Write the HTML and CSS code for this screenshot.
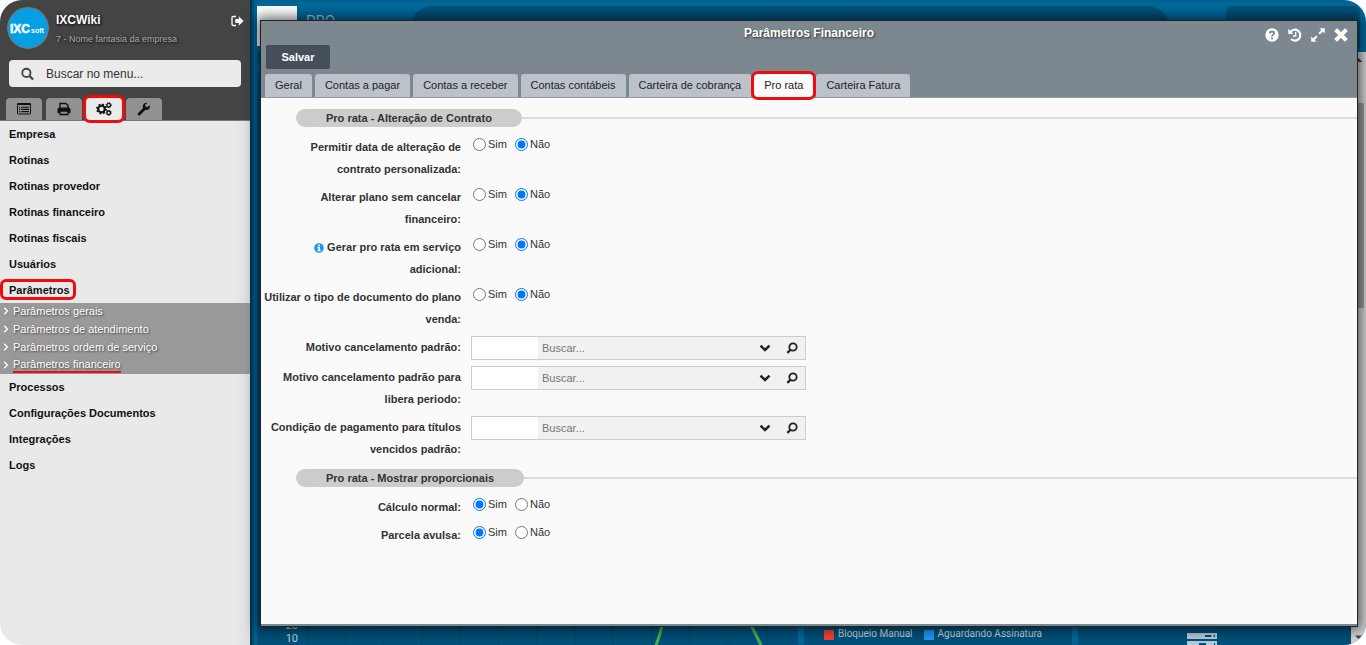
FILE: index.html
```
<!DOCTYPE html>
<html lang="pt-BR">
<head>
<meta charset="utf-8">
<title>IXCWiki - Parâmetros Financeiro</title>
<link rel="stylesheet" href="styles.css">
</head>
<body>
<svg class="defs" aria-hidden="true">
  <symbol id="chevron-down" viewBox="0 0 12 12"><path d="M1.5 3.7 6 8l4.500-4.300" fill="none" stroke="currentColor" stroke-width="2.500"/></symbol>
  <symbol id="lookup" viewBox="0 0 12 12"><circle cx="7" cy="5" r="3.700" fill="none" stroke="currentColor" stroke-width="1.800"/><path d="M4.500 7.700 1.300 10.900" stroke="currentColor" stroke-width="2.200"/></symbol>
  <symbol id="angle" viewBox="0 0 6 8"><path d="M1.200 .8 4.400 4 1.200 7.200" fill="none" stroke="currentColor" stroke-width="1.300"/></symbol>
</svg>
<div class="app">
  <aside class="sidebar">
    <header class="profile">
      <svg class="avatar" viewBox="0 0 42 42" role="img" aria-label="IXCsoft">
        <circle cx="21" cy="21" r="20.300" fill="#059fe3" stroke="#6c7a80" stroke-width="1.200"/>
        <text x="3" y="26" class="avatar-ixc">IXC</text><text x="24" y="26" class="avatar-soft">soft</text>
      </svg>
      <div class="who">
        <strong class="user">IXCWiki</strong>
        <span class="company">7 - Nome fantasia da empresa</span>
      </div>
      <button class="logout" aria-label="Sair"><svg viewBox="0 0 13 12"><path d="M5 1.500H2.200Q1 1.500 1 2.700v6.600q0 1.200 1.200 1.200H5" fill="none" stroke="currentColor" stroke-width="1.300"/><path d="M4.300 4h3.500V1.200L12.600 6l-4.800 4.800V8H4.300z" fill="currentColor"/></svg></button>
    </header>
    <div class="menu-search">
      <svg viewBox="0 0 14 14"><circle cx="5.800" cy="5.800" r="4.400" fill="none" stroke="currentColor" stroke-width="2"/><path d="m9 9 4 4" stroke="currentColor" stroke-width="2.400"/></svg>
      <input type="text" placeholder="Buscar no menu..." aria-label="Buscar no menu">
    </div>
    <div class="side-tabs">
      <button aria-label="Cadastros"><svg viewBox="0 0 16 14"><rect x="1.500" y="1.500" width="13" height="10.500" rx="1" fill="none" stroke="currentColor"/><path d="M1.500 2h13" stroke="currentColor" stroke-width="2"/><path d="M3 5.200h1.200M3 7.400h1.200M3 9.600h1.200M5.200 5.200H13M5.200 7.400H13M5.200 9.600H13" stroke="currentColor" stroke-width="1.100"/></svg></button>
      <button aria-label="Relatórios"><svg viewBox="0 0 16 14"><path d="M4 6V1.500h6L12 3.500V6" fill="none" stroke="currentColor" stroke-width="1.400"/><path d="M3.500 5.500h9Q14.500 5.500 14.500 7.500V11H12V9H4v2H1.500V7.500Q1.500 5.500 3.500 5.500z" fill="currentColor"/><path d="M4 9h8v3.500H4z" fill="none" stroke="currentColor" stroke-width="1.300"/></svg></button>
      <button class="active marked" aria-label="Configurações"><svg viewBox="0 0 16 14"><circle cx="5.500" cy="7" r="3.300" fill="none" stroke="currentColor" stroke-width="2.200"/><circle cx="5.500" cy="7" r="4.700" fill="none" stroke="currentColor" stroke-width="1.600" stroke-dasharray="1.850 1.850"/><circle cx="12.700" cy="3.200" r="1.800" fill="none" stroke="currentColor" stroke-width="1.300"/><circle cx="12.700" cy="3.200" r="2.600" fill="none" stroke="currentColor" stroke-dasharray="1.020 1.020"/><circle cx="12.700" cy="10.800" r="1.800" fill="none" stroke="currentColor" stroke-width="1.300"/><circle cx="12.700" cy="10.800" r="2.600" fill="none" stroke="currentColor" stroke-dasharray="1.020 1.020"/></svg></button>
      <button aria-label="Ferramentas"><svg viewBox="0 0 16 14"><path d="M3.200 12 9 6.300" stroke="currentColor" stroke-width="2.900" stroke-linecap="round"/><path d="M13.700 3.200A3.600 3.600 0 1 1 11.300 1l-2 1.400v1.900l1.800 1z" fill="currentColor"/></svg></button>
    </div>
    <nav class="menu">
      <a href="#">Empresa</a>
      <a href="#">Rotinas</a>
      <a href="#">Rotinas provedor</a>
      <a href="#">Rotinas financeiro</a>
      <a href="#">Rotinas fiscais</a>
      <a href="#">Usuários</a>
      <a href="#" class="current">Parâmetros</a>
      <div class="submenu">
        <a href="#"><svg viewBox="0 0 6 8"><use href="#angle"/></svg><span>Parâmetros gerais</span></a>
        <a href="#"><svg viewBox="0 0 6 8"><use href="#angle"/></svg><span>Parâmetros de atendimento</span></a>
        <a href="#"><svg viewBox="0 0 6 8"><use href="#angle"/></svg><span>Parâmetros ordem de serviço</span></a>
        <a href="#"><svg viewBox="0 0 6 8"><use href="#angle"/></svg><span class="underlined">Parâmetros financeiro</span></a>
      </div>
      <a href="#">Processos</a>
      <a href="#">Configurações Documentos</a>
      <a href="#">Integrações</a>
      <a href="#">Logs</a>
    </nav>
  </aside>

  <main class="workspace">
    <div class="topbar">
      <div class="brand-tile"></div>
      <span class="brand">PRO —</span>
      <div class="top-search"></div>
      <div class="top-box"></div>
    </div>
    <div class="dashboard">
      <div class="board">
        <div class="strip"></div>
        <section class="panel chart">
          <div class="axis"><span>20</span><span>10</span></div>
          <svg class="plot" width="491" height="26" viewBox="0 0 491 26">
            <path d="M.5 0v26M38.500 0v26M77 0v26M115 0v26M153 0v26M191.500 0v26M230 0v26M268 0v26M306 0v26M344.500 0v26M383 0v26M421 0v26M459.500 0v26" stroke="#004467" fill="none"/>
            <path d="M349 26q5-12 7-26M441 0l13 26" stroke="#4caf50" stroke-width="3" fill="none"/>
          </svg>
        </section>
        <section class="panel legend">
          <span class="key key-red"></span><span>Bloqueio Manual</span>
          <span class="key key-blue"></span><span>Aguardando Assinatura</span>
        </section>
        <section class="panel server">
          <svg viewBox="0 0 30 14"><path d="M1 3h28v4H1zM1 11h28v5H1z" fill="none" stroke="#b3ccd9" stroke-width="2"/><path d="M2 5h16M2 13h10" stroke="#b3ccd9" stroke-width="2"/><circle cx="25.500" cy="5" r="1.300" fill="#b3ccd9"/><path d="M19 13h8" stroke="#b3ccd9" stroke-width="2"/></svg>
        </section>
      </div>
      <div class="scrollbar">
        <svg viewBox="0 0 15 15"><path d="M3.500 10h8l-4-4z" fill="#444"/></svg>
        <div class="thumb"></div>
        <svg viewBox="0 0 15 15"><path d="M4 5.500h7L7.500 9z" fill="#444"/></svg>
      </div>
    </div>

    <section class="window" role="dialog" aria-labelledby="window-title">
      <header class="window-head">
        <div class="titlebar">
          <h1 id="window-title">Parâmetros Financeiro</h1>
          <div class="window-actions">
            <button aria-label="Ajuda"><svg viewBox="0 0 14 14"><circle cx="7" cy="7" r="6.700" fill="currentColor"/><path d="M4.900 5.400Q5 3.500 7 3.500t2.100 1.700Q9.100 6.200 8 6.800T7 8.500" fill="none" stroke="#7d8790" stroke-width="1.800"/><path d="M6.100 9.500h1.900v1.800H6.100z" fill="#7d8790"/></svg></button>
            <button aria-label="Histórico"><svg viewBox="0 0 14 14"><path d="M2.300 4A5.500 5.500 0 1 1 3 11.100" fill="none" stroke="currentColor" stroke-width="2.100"/><path d="M.3 .8v5.100h5.100z" fill="currentColor"/><path d="M7.700 4v4H5" fill="none" stroke="currentColor" stroke-width="1.300"/></svg></button>
            <button aria-label="Maximizar"><svg viewBox="0 0 14 14"><path d="M8.500 .2h5.300v5.300zM.2 8.500v5.300h5.300z" fill="currentColor"/><path d="m12 2-3.800 3.800M5.800 8.200 2 12" stroke="currentColor" stroke-width="2.200"/></svg></button>
            <button aria-label="Fechar"><svg viewBox="0 0 14 14"><path d="m3 3 8 8m0-8-8 8" stroke="currentColor" stroke-width="3.900" stroke-linecap="square"/></svg></button>
          </div>
        </div>
        <div class="toolbar"><button class="save">Salvar</button></div>
        <div class="tabs" role="tablist">
          <button role="tab">Geral</button>
          <button role="tab">Contas a pagar</button>
          <button role="tab">Contas a receber</button>
          <button role="tab">Contas contábeis</button>
          <button role="tab">Carteira de cobrança</button>
          <button role="tab" class="selected" aria-selected="true">Pro rata</button>
          <button role="tab">Carteira Fatura</button>
        </div>
      </header>
      <form class="form">
        <h2 class="group"><span>Pro rata - Alteração de Contrato</span></h2>
        <div class="row" role="radiogroup" aria-labelledby="l1">
          <span class="label" id="l1">Permitir data de alteração de contrato&nbsp;personalizada:</span>
          <div class="radios"><label><input type="radio" name="r1">Sim</label><label><input type="radio" name="r1" checked>Não</label></div>
        </div>
        <div class="row" role="radiogroup" aria-labelledby="l2">
          <span class="label" id="l2">Alterar plano sem cancelar financeiro:</span>
          <div class="radios"><label><input type="radio" name="r2">Sim</label><label><input type="radio" name="r2" checked>Não</label></div>
        </div>
        <div class="row" role="radiogroup" aria-labelledby="l3">
          <span class="label" id="l3"><svg class="info" viewBox="0 0 10 10"><circle cx="5" cy="5" r="4.800" fill="#2196f3"/><path d="M4 1.700h2v1.500H4zM3.500 4H6v3h.8v1.200H3.400V7h.8V5.200h-.7z" fill="#fff"/></svg> Gerar pro rata em serviço adicional:</span>
          <div class="radios"><label><input type="radio" name="r3">Sim</label><label><input type="radio" name="r3" checked>Não</label></div>
        </div>
        <div class="row" role="radiogroup" aria-labelledby="l4">
          <span class="label" id="l4">Utilizar o tipo de documento do plano venda:</span>
          <div class="radios"><label><input type="radio" name="r4">Sim</label><label><input type="radio" name="r4" checked>Não</label></div>
        </div>
        <div class="row">
          <label class="label" for="f5">Motivo cancelamento padrão:</label>
          <div class="lookup"><input class="code" id="f5" type="text"><input class="find" type="text" placeholder="Buscar..." aria-label="Buscar motivo"><button type="button" aria-label="Abrir lista"><svg viewBox="0 0 12 12"><use href="#chevron-down"/></svg></button><button type="button" aria-label="Pesquisar"><svg viewBox="0 0 12 12"><use href="#lookup"/></svg></button></div>
        </div>
        <div class="row">
          <label class="label" for="f6">Motivo cancelamento padrão para libera periodo:</label>
          <div class="lookup"><input class="code" id="f6" type="text"><input class="find" type="text" placeholder="Buscar..." aria-label="Buscar motivo de libera periodo"><button type="button" aria-label="Abrir lista"><svg viewBox="0 0 12 12"><use href="#chevron-down"/></svg></button><button type="button" aria-label="Pesquisar"><svg viewBox="0 0 12 12"><use href="#lookup"/></svg></button></div>
        </div>
        <div class="row">
          <label class="label" for="f7">Condição de pagamento para títulos vencidos padrão:</label>
          <div class="lookup"><input class="code" id="f7" type="text"><input class="find" type="text" placeholder="Buscar..." aria-label="Buscar condição"><button type="button" aria-label="Abrir lista"><svg viewBox="0 0 12 12"><use href="#chevron-down"/></svg></button><button type="button" aria-label="Pesquisar"><svg viewBox="0 0 12 12"><use href="#lookup"/></svg></button></div>
        </div>
        <h2 class="group"><span>Pro rata - Mostrar proporcionais</span></h2>
        <div class="row" role="radiogroup" aria-labelledby="l8">
          <span class="label" id="l8">Cálculo normal:</span>
          <div class="radios"><label><input type="radio" name="r8" checked>Sim</label><label><input type="radio" name="r8">Não</label></div>
        </div>
        <div class="row" role="radiogroup" aria-labelledby="l9">
          <span class="label" id="l9">Parcela avulsa:</span>
          <div class="radios"><label><input type="radio" name="r9" checked>Sim</label><label><input type="radio" name="r9">Não</label></div>
        </div>
      </form>
    </section>
  </main>
</div>
</body>
</html>
```
FILE: styles.css
```
* { box-sizing: border-box; }
body { margin: 0; background: #fff; font: 11px/16px "Liberation Sans", Arial, sans-serif; color: #333; }
button, input { font: inherit; color: inherit; border: 0; margin: 0; padding: 0; background: none; }
a { color: inherit; text-decoration: none; }
svg { display: block; }
.defs { position: absolute; width: 0; height: 0; }

.app { display: flex; min-height: 100vh; border-radius: 22px; overflow: hidden; }

/* Sidebar */
.sidebar { width: 250px; flex: none; background: linear-gradient(to right, #e9e9e9 94%, #dedede); }
.profile { display: flex; align-items: flex-start; height: 60px; padding: 7px 6px 0 7px; background: #444; }
.avatar { width: 42px; height: 42px; }
.avatar-ixc { font: bold 12px "Liberation Sans", Arial, sans-serif; fill: #fff; stroke: #fff; stroke-width: .5px; }
.avatar-soft { font: bold 7px "Liberation Sans", Arial, sans-serif; fill: #fff; }
.who { flex: 1; padding: 4px 0 0 7px; text-shadow: 1px 1px 3px #000; }
.user { display: block; font-size: 12px; line-height: 18px; color: #fff; }
.company { display: block; font-size: 9px; line-height: 20px; color: #aaa; }
.logout { color: #fff; padding-top: 8px; }
.logout svg { width: 13px; height: 12px; }
.menu-search { display: flex; align-items: center; gap: 12px; height: 27px; padding: 0 12px; margin: 0 9px; background: #ebebeb; border-radius: 4px; position: relative; box-shadow: 0 0 0 10px #444; }
.menu-search svg { width: 13px; height: 14px; color: #444; }
.menu-search input { flex: 1; min-width: 0; font-size: 12px; outline: 0; }
.menu-search input::placeholder { color: #333; opacity: 1; }
.side-tabs { display: flex; gap: 4px; padding: 11px 6px 0; height: 34px; background: #444; border-bottom: 1px solid #777; position: relative; }
.side-tabs button { width: 36px; display: grid; place-items: center; background: #919191; border-radius: 4px 4px 0 0; color: #111; }
.side-tabs svg { width: 16px; height: 14px; }
.side-tabs .active { background: #ebebeb; }
.side-tabs .marked { border-radius: 4px; box-shadow: 0 0 0 3px #f00c0c; }
.menu > a { display: block; padding: 0 9px; font-weight: bold; line-height: 26px; color: #111; }
.menu > .current { display: block; width: 76px; height: 21px; margin: 2px 0 3px; padding: 0 6px; border: 3px solid #f00c0c; border-radius: 6px; line-height: 16px; }
.submenu { display: grid; grid-auto-rows: 16px; gap: 2px; padding-bottom: 1px; background: #999; color: #fff; text-shadow: 1px 1px 2px #444; }
.submenu a { display: flex; align-items: center; gap: 4px; padding-left: 3px; }
.submenu svg { width: 6px; height: 8px; }
.submenu .underlined { border-bottom: 2px solid #f00c0c; line-height: 14px; }

/* Dashboard behind the window */
.workspace { flex: 1; min-width: 0; display: flex; flex-direction: column; position: relative; background: #00699b; box-shadow: inset 4px 0 4px -2px #023; font-family: Roboto, sans-serif; }
.topbar { display: flex; height: 52px; padding: 6px 6px 0 7px; }
.brand-tile { width: 40px; height: 40px; background: #fff; }
.brand { width: 104px; margin-left: 9px; padding-top: 7px; font-size: 15px; color: #9fc3d6; white-space: nowrap; }
.top-search { flex: 1; margin: 0 56px 0 0; background: #00517b; border-radius: 26px; }
.top-box { width: 134px; background: #00517b; border-radius: 6px; }
.dashboard { flex: 1; display: flex; }
.board { flex: 1; display: grid; grid-template-columns: 541fr 268fr 273fr; grid-template-rows: 13px 1fr; gap: 6px; padding-left: 7px; }
.strip { grid-column: 1 / -1; background: #00517b; border-radius: 0 0 4px 4px; }
.panel { display: flex; background: #00517b; color: #c5d6df; font-size: 10px; line-height: 14px; overflow: hidden; }
.chart { align-items: flex-end; gap: 9px; min-width: 0; }
.axis { flex: none; width: 41px; display: grid; text-align: right; font-size: 11px; line-height: 13px; }
.plot { flex: none; }
.legend { align-items: flex-end; justify-content: flex-start; gap: 4px; padding: 0 0 4px 20px; white-space: nowrap; }
.key { width: 10px; height: 10px; margin-bottom: 1px; background: #f44336; }
.key-blue { background: #2196f3; margin-left: 7px; }
.server { align-items: flex-end; justify-content: center; padding-right: 26px; }
.server svg { width: 30px; height: 14px; }
.scrollbar { width: 15px; display: flex; flex-direction: column; background: #d4d4d4; }
.scrollbar svg { width: 15px; height: 15px; }
.scrollbar .thumb { width: 13px; height: 205px; margin: 36px 0 auto; background: #9b9b9b; }

/* Floating window */
.window { position: absolute; inset: 20px 8px 18px 10px; display: flex; flex-direction: column; border: 1px solid #1d2327; background: #fafafa; box-shadow: 0 0 12px 3px rgba(0, 0, 0, .6); font-family: "Liberation Sans", Arial, sans-serif; }
.window::after { content: ""; height: 2px; margin-top: auto; background: #7d8790; }
.window-head { background: #7d8790; border-bottom: 1px solid #929ba3; }
.titlebar { display: grid; grid-template-columns: 1fr auto 1fr; height: 24px; color: #fff; align-items: center; }
.titlebar h1 { grid-column: 2; margin: 0; font-size: 12px; line-height: 24px; text-shadow: 1px 1px 2px #333; }
.window-actions { display: flex; gap: 9px; justify-content: flex-end; padding: 3px 9px 0 0; }
.window-actions svg { width: 14px; height: 14px; }
.toolbar { padding: 0 5px; }
.save { width: 64px; height: 24px; background: #454f59; border-radius: 2px; color: #fff; font-weight: bold; }
.tabs { display: flex; gap: 3px; padding: 5px 4px 0; }
.tabs button { height: 23px; padding: 0 10px 2px; background: #bcc2c9; border-radius: 3px 3px 0 0; color: #222; white-space: nowrap; }
.tabs .selected { background: #fafafa; border-radius: 4px; box-shadow: 0 0 0 3px #f00c0c; position: relative; }

/* Form */
.form { padding-top: 11px; }
.group { display: flex; align-items: center; margin: 0 0 9px 35px; font-size: 11px; line-height: 18px; }
.group span { padding: 0 30px; background: #ccc; border-radius: 9px; }
.group::after { content: ""; flex: 1; height: 2px; background: #dadada; }
.row { display: flex; gap: 10px; align-items: flex-start; margin-bottom: 6px; }
.row + .group { margin-top: 9px; }
.label { width: 200px; padding-left: 2px; flex: none; text-align: right; font-weight: bold; line-height: 22px; }
.info { display: inline-block; width: 10px; height: 10px; vertical-align: -2px; }
.radios { display: flex; gap: 8px; padding-left: 2px; }
.radios label { display: flex; align-items: center; gap: 2px; line-height: 16px; }
.radios input { width: 13px; height: 13px; accent-color: #0075ff; }
.lookup { display: flex; width: 335px; height: 24px; border: 1px solid #ccc; background: #f1f1f1; }
.lookup input { min-width: 0; outline: 0; }
.lookup .code { width: 66px; background: #fff; }
.lookup .find { flex: 1; padding-left: 4px; }
.lookup .find::placeholder { color: #757575; opacity: 1; }
.lookup button { width: 27px; display: grid; place-items: center; color: #222; }
.lookup svg { width: 12px; height: 12px; }
```
